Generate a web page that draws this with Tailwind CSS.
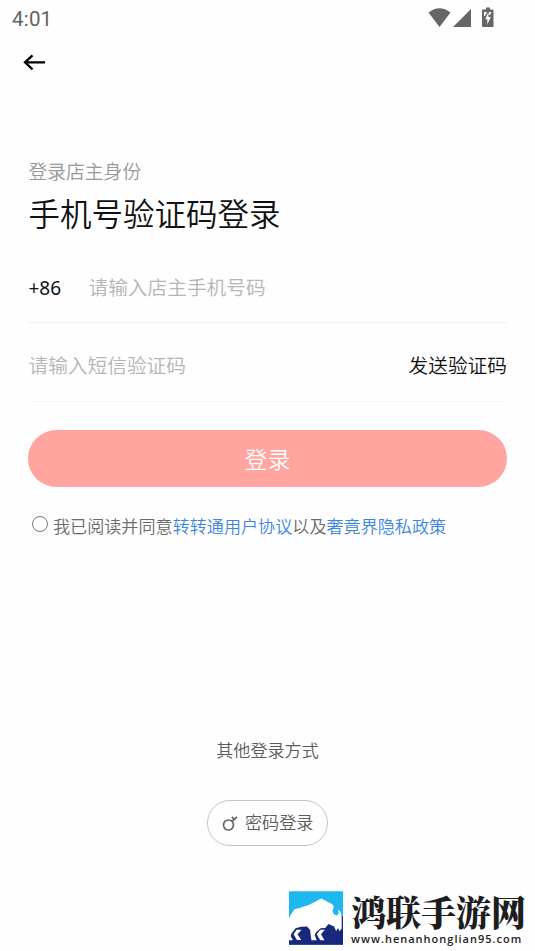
<!DOCTYPE html>
<html lang="zh-CN">
<head>
<meta charset="utf-8">
<title>登录</title>
<script src="https://cdn.jsdelivr.net/npm/@tailwindcss/browser@4"></script>
</head>
<body class="bg-white">
<div class="relative flex h-[951px] w-[535px] flex-col overflow-hidden bg-[#fefefe] font-['Noto_Sans_CJK_SC',sans-serif] font-[350] text-[#111]">
  <header class="flex h-9 shrink-0 items-center justify-between pl-3 pr-[40px]">
    <span class="pt-[2px] font-['Roboto',sans-serif] text-[20.5px] leading-9 font-normal tracking-[0.2px] text-[#626262]">4:01</span>
    <svg class="h-9 w-[68px]" viewBox="0 0 68 36" fill="#666">
      <path d="M1.500 12.600Q12.500 3.800 23.500 12.600L12.500 27Z"/>
      <path d="M44 9V27H26Z"/>
      <path d="M59 7.500h4v2h2.500q1 0 1 1V26q0 1-1 1H56q-1 0-1-1V10.500q0-1 1-1H59Z"/>
      <path d="M57 12h3l-2 4H57ZM62 12h2.500l-1.500 3H61.500ZM61 13L58.300 19.200h2V24.500L63.800 17H61.500Z" fill="#fff"/>
    </svg>
  </header>
  <nav class="flex h-[52px] shrink-0 items-center pl-[23px]">
    <svg class="h-6 w-6" viewBox="0 0 24 24" fill="none" stroke="#000" stroke-width="2.3"><path d="M22 12.300H2M9.500 5.300L2 12.300l7.500 7"/></svg>
  </nav>
  <main class="flex flex-col px-7">
    <p class="mt-[70px] h-[26px] pl-[0.5px] text-[18.8px] leading-[26px] text-[#999]">登录店主身份</p>
    <h1 class="mt-[6px] h-[44px] pl-[0.5px] text-[31.5px] leading-[44px]">手机号验证码登录</h1>
    <div class="mt-[19px] flex h-[70px] border-b border-[#f1f1f1] pl-[0.5px] text-[19.7px] leading-[68px]">
      <span class="w-[60px] font-['Noto_Sans',sans-serif] text-[19px] leading-[70px] font-normal">+86</span><span class="text-[#b5b5b5]">请输入店主手机号码</span>
    </div>
    <div class="flex h-[79px] justify-between border-b border-[#f6f6f6] pl-[0.5px] text-[19.7px] leading-[84px]">
      <span class="text-[#b5b5b5]">请输入短信验证码</span><span>发送验证码</span>
    </div>
    <button class="mt-[28px] h-[57px] rounded-full bg-[#ffa49f] text-[23px] leading-[57px] text-white">登录</button>
    <div class="mt-[25px] flex h-7 pl-1">
      <span class="mt-[4px] mr-[5px] size-4 rounded-full border border-[#777]"></span>
      <p class="text-[17.1px] leading-7 whitespace-nowrap text-[#6b6b6b]">我已阅读并同意<span class="text-[#3c86df]">转转通用户协议</span>以及<span class="text-[#3c86df]">奢竟界隐私政策</span></p>
    </div>
  </main>
  <section class="mt-[196px] flex flex-col items-center text-[17.1px] text-[#5c5c5c]">
    <p class="leading-7">其他登录方式</p>
    <div class="mt-[36px] flex h-[46px] w-[121px] items-center rounded-full border border-[#c4c4c4] pl-[14px]">
      <svg class="mr-[6px] h-[18px] w-[17px]" viewBox="0 0 17 18" fill="none" stroke="#666" stroke-width="1.7"><circle cx="6.500" cy="11" r="5"/><path d="M9.800 7.500L15 3M9.800 2.800l2.400 2.500"/></svg>
      <span class="-mt-[2px] leading-[42px]">密码登录</span>
    </div>
  </section>
  <footer class="mt-auto flex h-[60px] pl-[289px]">
    <svg class="h-[54px] w-[54px] shrink-0" viewBox="0 0 164 163">
      <path fill="#1fb8ee" d="M0 0H164V163H0Z"/><path fill="#17297d" d="M0 76H164V163H0Z"/>
      <path fill="#fff" d="M0 80L16 56L60 42L98 22L132 40L136 48L132 60L136 70L146 74L151 66L149 56L156 62L160 78V114L153 122L149 112L143 121L137 107L120 100L110 112L96 113L82 125L78 133L84 149H68L64 118L55 107L36 108L20 113L8 128L5 136L12 149H0Z"/>
      <path fill="#fff" d="M23 117H38L26 131L37 148H24L14 131ZM95 117H109L97 131L108 149H95L84 131Z"/>
    </svg>
    <div class="ml-2 flex flex-col text-[#1d1d1d]">
      <span class="h-[42px] font-['Noto_Serif_CJK_SC','Noto_Sans_CJK_SC',serif] text-[35px] leading-[40px] font-black whitespace-nowrap">鸿联手游网</span>
      <span class="font-['Open_Sans',sans-serif] text-[11px] leading-[12px] font-semibold tracking-[1px]">www.henanhonglian95.com</span>
    </div>
  </footer>
</div>
</body>
</html>
